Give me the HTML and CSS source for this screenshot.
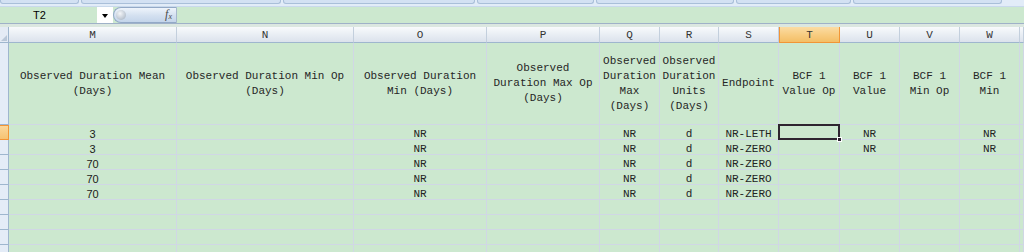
FILE: index.html
```html
<!DOCTYPE html>
<html lang="en">
<head>
    <meta charset="UTF-8">
    <title>Sheet1</title>
    <link rel="stylesheet" href="styles.css">
</head>
<body>
    <div class="ribbon">
        <div class="group" style="width:77px"></div>
        <div class="group" style="width:198px"></div>
        <div class="group" style="width:190px"></div>
        <div class="group" style="width:115px"></div>
        <div class="group" style="width:136px"></div>
        <div class="group" style="width:113px"></div>
        <div class="group" style="width:147px"></div>
    </div>

    <div class="formula-bar">
        <div class="name-box">T2</div>
        <div class="name-drop"><span class="arrow"></span></div>
        <div class="fx-pill">
            <span class="knob"></span>
            <span class="fx">f<sub>x</sub></span>
        </div>
        <div class="formula-input"></div>
    </div>
    <div class="bar-gap"></div>

    <div class="sheet">
        <!-- column headers -->
        <div class="corner"></div>
        <div class="ch">M</div>
        <div class="ch">N</div>
        <div class="ch">O</div>
        <div class="ch">P</div>
        <div class="ch">Q</div>
        <div class="ch">R</div>
        <div class="ch">S</div>
        <div class="ch active">T</div>
        <div class="ch">U</div>
        <div class="ch">V</div>
        <div class="ch">W</div>
        <div class="ch"></div>

        <!-- row 1: field names -->
        <div class="rh"></div>
        <div class="c hd">Observed Duration Mean<br>(Days)</div>
        <div class="c hd">Observed Duration Min Op<br>(Days)</div>
        <div class="c hd">Observed Duration<br>Min (Days)</div>
        <div class="c hd">Observed<br>Duration Max Op<br>(Days)</div>
        <div class="c hd">Observed<br>Duration<br>Max<br>(Days)</div>
        <div class="c hd">Observed<br>Duration<br>Units<br>(Days)</div>
        <div class="c hd">Endpoint</div>
        <div class="c hd">BCF 1<br>Value Op</div>
        <div class="c hd">BCF 1<br>Value</div>
        <div class="c hd">BCF 1<br>Min Op</div>
        <div class="c hd">BCF 1<br>Min</div>
        <div class="c hd"></div>

        <!-- row 2 -->
        <div class="rh active"></div>
        <div class="c num">3</div>
        <div class="c"></div>
        <div class="c">NR</div>
        <div class="c"></div>
        <div class="c">NR</div>
        <div class="c">d</div>
        <div class="c">NR-LETH</div>
        <div class="c sel"></div>
        <div class="c">NR</div>
        <div class="c"></div>
        <div class="c">NR</div>
        <div class="c"></div>

        <!-- row 3 -->
        <div class="rh"></div>
        <div class="c num">3</div>
        <div class="c"></div>
        <div class="c">NR</div>
        <div class="c"></div>
        <div class="c">NR</div>
        <div class="c">d</div>
        <div class="c">NR-ZERO</div>
        <div class="c"></div>
        <div class="c">NR</div>
        <div class="c"></div>
        <div class="c">NR</div>
        <div class="c"></div>

        <!-- row 4 -->
        <div class="rh"></div>
        <div class="c num">70</div>
        <div class="c"></div>
        <div class="c">NR</div>
        <div class="c"></div>
        <div class="c">NR</div>
        <div class="c">d</div>
        <div class="c">NR-ZERO</div>
        <div class="c"></div>
        <div class="c"></div>
        <div class="c"></div>
        <div class="c"></div>
        <div class="c"></div>

        <!-- row 5 -->
        <div class="rh"></div>
        <div class="c num">70</div>
        <div class="c"></div>
        <div class="c">NR</div>
        <div class="c"></div>
        <div class="c">NR</div>
        <div class="c">d</div>
        <div class="c">NR-ZERO</div>
        <div class="c"></div>
        <div class="c"></div>
        <div class="c"></div>
        <div class="c"></div>
        <div class="c"></div>

        <!-- row 6 -->
        <div class="rh"></div>
        <div class="c num">70</div>
        <div class="c"></div>
        <div class="c">NR</div>
        <div class="c"></div>
        <div class="c">NR</div>
        <div class="c">d</div>
        <div class="c">NR-ZERO</div>
        <div class="c"></div>
        <div class="c"></div>
        <div class="c"></div>
        <div class="c"></div>
        <div class="c"></div>

        <!-- rows 7-10 empty -->
        <div class="rh"></div>
        <div class="c"></div><div class="c"></div><div class="c"></div><div class="c"></div>
        <div class="c"></div><div class="c"></div><div class="c"></div><div class="c"></div>
        <div class="c"></div><div class="c"></div><div class="c"></div><div class="c"></div>

        <div class="rh"></div>
        <div class="c"></div><div class="c"></div><div class="c"></div><div class="c"></div>
        <div class="c"></div><div class="c"></div><div class="c"></div><div class="c"></div>
        <div class="c"></div><div class="c"></div><div class="c"></div><div class="c"></div>

        <div class="rh"></div>
        <div class="c"></div><div class="c"></div><div class="c"></div><div class="c"></div>
        <div class="c"></div><div class="c"></div><div class="c"></div><div class="c"></div>
        <div class="c"></div><div class="c"></div><div class="c"></div><div class="c"></div>

        <div class="rh"></div>
        <div class="c"></div><div class="c"></div><div class="c"></div><div class="c"></div>
        <div class="c"></div><div class="c"></div><div class="c"></div><div class="c"></div>
        <div class="c"></div><div class="c"></div><div class="c"></div><div class="c"></div>
    </div>
</body>
</html>
```

FILE: styles.css
```css
html, body {
    margin: 0;
    padding: 0;
    width: 1024px;
    height: 252px;
    overflow: hidden;
    background: #cce8cf;
    font-family: "Liberation Mono", "DejaVu Sans Mono", monospace;
    font-size: 11px;
    color: #222;
}

/* ribbon bottom edge */
.ribbon {
    display: flex;
    gap: 2px;
    height: 7px;
    background: #e2ecf8;
    box-sizing: border-box;
    border-bottom: 1px solid #c9d9ec;
}
.ribbon .group {
    height: 3px;
    background: #d3e1f3;
    border: 1px solid #a9bfd9;
    border-top: none;
    border-radius: 0 0 3px 3px;
}

/* formula bar */
.formula-bar {
    display: flex;
    height: 16px;
    background: #cce8cf;
    border-bottom: 1px solid #9fb1c8;
}
.name-box {
    width: 97px;
    font-family: "Liberation Sans", Arial, sans-serif;
    font-size: 11px;
    line-height: 17px;
    color: #000;
    padding-left: 33px;
    box-sizing: border-box;
}
.name-drop {
    width: 16px;
    background: #fff;
    display: flex;
    align-items: center;
    justify-content: center;
}
.name-drop .arrow {
    width: 0;
    height: 0;
    border-left: 3px solid transparent;
    border-right: 3px solid transparent;
    border-top: 4px solid #000;
    margin-top: 1px;
}
.fx-pill {
    width: 64px;
    box-sizing: border-box;
    border: 1px solid #93a9c7;
    border-right: 1px solid #a6b7cc;
    border-radius: 8px 0 0 8px;
    background: linear-gradient(#eef4fb, #d3e0f0 55%, #c4d5ea);
    display: flex;
    align-items: center;
    justify-content: space-between;
    padding: 0 4px 0 2px;
}
.fx-pill .knob {
    width: 10px;
    height: 10px;
    border-radius: 50%;
    background: radial-gradient(circle at 40% 35%, #f4f6f9, #b9c3cf 70%, #9fabba);
}
.fx-pill .fx {
    font-family: "Liberation Serif", "Times New Roman", serif;
    font-style: italic;
    font-size: 12px;
    color: #4a4a4a;
    line-height: 12px;
}
.fx-pill .fx sub {
    font-size: 8px;
    vertical-align: -1px;
}
.formula-input {
    flex: 1;
    background: #cce8cf;
}
.bar-gap {
    height: 3px;
    background: #dbe7e0;
}

/* sheet grid */
.sheet {
    display: grid;
    grid-template-columns: 9px 168px 177px 133px 113px 60px 59px 60px 61px 60px 60px 60px 4px;
    grid-template-rows: 16px 82px repeat(9, 15px);
    width: 1024px;
}
.corner {
    background: #e4ebf5;
    border-right: 1px solid #9eb6ce;
    border-bottom: 1px solid #9eb6ce;
    box-sizing: border-box;
    position: relative;
}
.corner::after {
    content: "";
    position: absolute;
    right: 1px;
    bottom: 1px;
    border-left: 6px solid transparent;
    border-bottom: 6px solid #b9c7d8;
}
.ch {
    background: linear-gradient(#f8fafc, #e9eef4 50%, #dbe2ec);
    border-right: 1px solid #c3cfdd;
    border-bottom: 1px solid #9eb6ce;
    box-sizing: border-box;
    text-align: center;
    line-height: 16px;
    font-size: 11px;
    color: #333;
}
.ch.active {
    background: linear-gradient(#fbdca4, #f8cd82 50%, #f4be66);
    border-right-color: #f29536;
    border-left: 1px solid #f29536;
    border-bottom-color: #f29536;
}
.rh {
    background: #e4ecf7;
    border-right: 1px solid #9eb6ce;
    border-bottom: 1px solid #9eb6ce;
    box-sizing: border-box;
}
.rh.active {
    background: linear-gradient(#fbd79b, #f6c372);
    border-color: #f29536;
    border-top: 1px solid #f29536;
}
.c {
    border-right: 1px solid #d0d7e5;
    border-bottom: 1px solid #d0d7e5;
    box-sizing: border-box;
    text-align: center;
    line-height: 14px;
    padding-top: 2px;
    white-space: nowrap;
}
.c.hd {
    display: flex;
    align-items: center;
    justify-content: center;
    line-height: 15px;
    padding-top: 0;
    color: #262626;
}
.c.num {
    font-family: "Liberation Sans", Arial, sans-serif;
    font-size: 11px;
    color: #1a1a1a;
}
.c.sel {
    position: relative;
}
.c.sel::before {
    content: "";
    position: absolute;
    left: -1px;
    top: -1px;
    right: -1px;
    bottom: -1px;
    border: 2px solid #2e2430;
}
.c.sel::after {
    content: "";
    position: absolute;
    right: -3px;
    bottom: -3px;
    width: 5px;
    height: 5px;
    background: #2e2430;
    border: 1px solid #fff;
    box-sizing: border-box;
}
```
